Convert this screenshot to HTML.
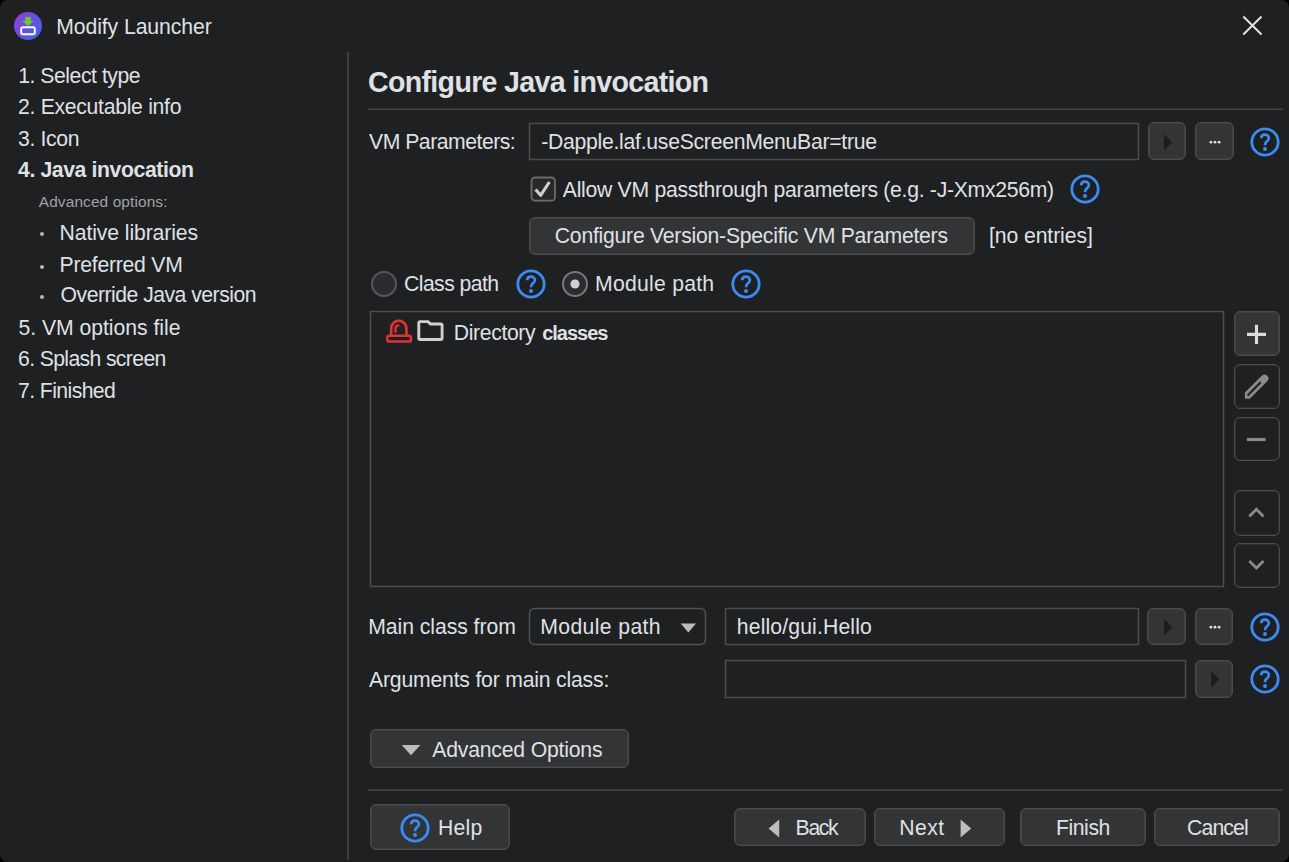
<!DOCTYPE html>
<html><head><meta charset="utf-8"><style>
html,body{margin:0;padding:0;background:#000;width:1289px;height:862px;overflow:hidden}
body{position:relative;font-family:"Liberation Sans",sans-serif}
</style></head><body>
<div style="position:absolute;left:0;top:0;width:1289px;height:862px;background:#1f2022;border-radius:8px"></div><svg style="position:absolute;left:14px;top:12px;overflow:visible" width="28" height="28" viewBox="0 0 28 28"><defs><linearGradient id="g1" x1="0" y1="0" x2="1" y2="1"><stop offset="0" stop-color="#9a3bd0"/><stop offset="1" stop-color="#3366f0"/></linearGradient></defs><circle cx="14" cy="14" r="14" fill="url(#g1)"/><path d="M11.2 5 H16.8 V9 H19.6 L14 14 L8.4 9 H11.2 Z" fill="#6cc92a"/><rect x="7.2" y="15.3" width="13.6" height="6.9" rx="1.8" fill="none" stroke="#fff" stroke-width="1.9"/></svg><svg style="position:absolute;left:1240px;top:13px;overflow:visible" width="25" height="25" viewBox="0 0 25 25"><path d="M3.3 3.5 L21.5 21.5 M21.5 3.5 L3.3 21.5" stroke="#e2e2e2" stroke-width="2.0" stroke-linecap="butt"/></svg><div style="position:absolute;left:40.3px;top:232.4px;width:4px;height:4px;border-radius:2px;background:#b8b8b8"></div><div style="position:absolute;left:40.3px;top:264.59999999999997px;width:4px;height:4px;border-radius:2px;background:#b8b8b8"></div><div style="position:absolute;left:40.3px;top:295.29999999999995px;width:4px;height:4px;border-radius:2px;background:#b8b8b8"></div><div style="position:absolute;left:347px;top:52px;width:1px;height:808px;box-sizing:border-box;background:#383939;border-radius:0px;"></div><div style="position:absolute;left:348px;top:52px;width:1px;height:808px;box-sizing:border-box;background:#434444;border-radius:0px;"></div><div style="position:absolute;left:368px;top:108px;width:915px;height:1px;box-sizing:border-box;background:#313232;border-radius:0px;"></div><div style="position:absolute;left:368px;top:109px;width:915px;height:1px;box-sizing:border-box;background:#434444;border-radius:0px;"></div><svg style="position:absolute;left:527px;top:121px;overflow:visible" width="614" height="41"><rect x="2.5" y="2.5" width="609" height="36" rx="0" fill="none" stroke="#4b4c4c" stroke-width="1.5"/></svg><div style="position:absolute;left:1148px;top:122px;width:38px;height:38px;box-sizing:border-box;background:#333436;border:1px solid #4b4c4f;border-radius:6px;box-shadow:inset 0 0 0 1px #3e3f41;"></div><svg style="position:absolute;left:1164.0500000000002px;top:133.70000000000002px;overflow:visible" width="10" height="18" viewBox="0 0 10 18"><path d="M0 0 L8.3 8.2 L0 16.5 Z" fill="#1c1c1d"/></svg><div style="position:absolute;left:1195px;top:122px;width:39px;height:38px;box-sizing:border-box;background:#333436;border:1px solid #4b4c4f;border-radius:6px;box-shadow:inset 0 0 0 1px #3e3f41;"></div><svg style="position:absolute;left:1206.4px;top:139.3px;overflow:visible" width="16" height="4" viewBox="0 0 16 4"><circle cx="4.9" cy="3.2" r="1.4" fill="#e0e0e0"/><circle cx="9" cy="3.2" r="1.4" fill="#e0e0e0"/><circle cx="13.1" cy="3.2" r="1.4" fill="#e0e0e0"/></svg><svg style="position:absolute;left:1250.2px;top:126.6px;overflow:visible" width="30" height="30" viewBox="0 0 30 30"><circle cx="15" cy="15" r="13.2" fill="none" stroke="#3a8cf4" stroke-width="2.8"/><path d="M11.2 11.2 C11.2 9 12.9 7.65 15.1 7.65 C17.3 7.65 18.9 9.2 18.9 11.1 C18.9 12.7 18 13.6 16.9 14.4 C15.8 15.3 15.1 16 15.1 17.6 V18.3" fill="none" stroke="#3a8cf4" stroke-width="2.7"/><circle cx="15" cy="22.1" r="2" fill="#3a8cf4"/></svg><svg style="position:absolute;left:528.5px;top:175.3px;overflow:visible" width="28.5" height="28.19999999999999"><rect x="2.5" y="2.5" width="23.5" height="23.19999999999999" rx="3.5" fill="#28292b" stroke="#6a6b6d" stroke-width="1.8"/></svg><svg style="position:absolute;left:530px;top:177px;overflow:visible" width="25" height="24" viewBox="0 0 25 24"><path d="M5.6 12.6 L10.6 18.3 L19.4 5" fill="none" stroke="#d0d0d0" stroke-width="3.1" stroke-linejoin="round"/></svg><svg style="position:absolute;left:1070px;top:174px;overflow:visible" width="30" height="30" viewBox="0 0 30 30"><circle cx="15" cy="15" r="13.2" fill="none" stroke="#3a8cf4" stroke-width="2.8"/><path d="M11.2 11.2 C11.2 9 12.9 7.65 15.1 7.65 C17.3 7.65 18.9 9.2 18.9 11.1 C18.9 12.7 18 13.6 16.9 14.4 C15.8 15.3 15.1 16 15.1 17.6 V18.3" fill="none" stroke="#3a8cf4" stroke-width="2.7"/><circle cx="15" cy="22.1" r="2" fill="#3a8cf4"/></svg><div style="position:absolute;left:529px;top:217px;width:446px;height:38px;box-sizing:border-box;background:#333436;border:1px solid #4b4c4f;border-radius:6px;box-shadow:inset 0 0 0 1px #3e3f41;"></div><svg style="position:absolute;left:371px;top:271px;overflow:visible" width="26" height="26" viewBox="0 0 26 26"><circle cx="13" cy="13" r="12" fill="#2b2c2f" stroke="#55575b" stroke-width="2"/></svg><svg style="position:absolute;left:515.5px;top:268.5px;overflow:visible" width="30" height="30" viewBox="0 0 30 30"><circle cx="15" cy="15" r="13.2" fill="none" stroke="#3a8cf4" stroke-width="2.8"/><path d="M11.2 11.2 C11.2 9 12.9 7.65 15.1 7.65 C17.3 7.65 18.9 9.2 18.9 11.1 C18.9 12.7 18 13.6 16.9 14.4 C15.8 15.3 15.1 16 15.1 17.6 V18.3" fill="none" stroke="#3a8cf4" stroke-width="2.7"/><circle cx="15" cy="22.1" r="2" fill="#3a8cf4"/></svg><svg style="position:absolute;left:561.8px;top:271px;overflow:visible" width="26" height="26" viewBox="0 0 26 26"><circle cx="13" cy="13" r="12" fill="#2b2c2f" stroke="#76787c" stroke-width="2"/><circle cx="13" cy="13" r="4.6" fill="#d0d0d0"/></svg><svg style="position:absolute;left:730.5px;top:269px;overflow:visible" width="30" height="30" viewBox="0 0 30 30"><circle cx="15" cy="15" r="13.2" fill="none" stroke="#3a8cf4" stroke-width="2.8"/><path d="M11.2 11.2 C11.2 9 12.9 7.65 15.1 7.65 C17.3 7.65 18.9 9.2 18.9 11.1 C18.9 12.7 18 13.6 16.9 14.4 C15.8 15.3 15.1 16 15.1 17.6 V18.3" fill="none" stroke="#3a8cf4" stroke-width="2.7"/><circle cx="15" cy="22.1" r="2" fill="#3a8cf4"/></svg><svg style="position:absolute;left:368px;top:309px;overflow:visible" width="858" height="280"><rect x="2.5" y="2.5" width="853" height="275" rx="0" fill="none" stroke="#4d4e4e" stroke-width="1.5"/></svg><svg style="position:absolute;left:385px;top:318px;overflow:visible" width="28" height="26" viewBox="0 0 28 26"><path d="M6.2 17 V10.3 A7.6 7.6 0 0 1 21.4 10.3 V17" fill="none" stroke="#e03232" stroke-width="2.7"/><path d="M10.5 13.8 V10.6 A3.2 3.2 0 0 1 13.3 7.5" fill="none" stroke="#e03232" stroke-width="2.4" stroke-linecap="round"/><rect x="2.3" y="17.7" width="23.6" height="5.8" rx="1.6" fill="none" stroke="#e03232" stroke-width="2.6"/></svg><svg style="position:absolute;left:417px;top:319px;overflow:visible" width="28" height="24" viewBox="0 0 28 24"><path d="M1.8 4 Q1.8 2.6 3.2 2.6 H11 L13.3 5 H23.7 Q25.1 5 25.1 6.4 V19.1 Q25.1 20.5 23.7 20.5 H3.2 Q1.8 20.5 1.8 19.1 Z" fill="none" stroke="#cfcfcf" stroke-width="2.9" stroke-linejoin="round"/></svg><div style="position:absolute;left:1234px;top:311px;width:46px;height:45px;box-sizing:border-box;background:#333436;border:1px solid #4b4c4f;border-radius:6px;box-shadow:inset 0 0 0 1px #3e3f41;"></div><svg style="position:absolute;left:1246px;top:324px;overflow:visible" width="22" height="21" viewBox="0 0 22 21"><path d="M1 10.4 H20 M10.5 0.8 V20" stroke="#dcdcdc" stroke-width="3.1"/></svg><div style="position:absolute;left:1234px;top:364px;width:46px;height:45px;box-sizing:border-box;background:transparent;border:1px solid #4c4d4f;border-radius:6px;box-shadow:inset 0 0 0 1px #2c2d2f;"></div><div style="position:absolute;left:1234px;top:417px;width:46px;height:44px;box-sizing:border-box;background:transparent;border:1px solid #4c4d4f;border-radius:6px;box-shadow:inset 0 0 0 1px #2c2d2f;"></div><div style="position:absolute;left:1234px;top:490px;width:46px;height:46px;box-sizing:border-box;background:transparent;border:1px solid #4c4d4f;border-radius:6px;box-shadow:inset 0 0 0 1px #2c2d2f;"></div><div style="position:absolute;left:1234px;top:543px;width:46px;height:45px;box-sizing:border-box;background:transparent;border:1px solid #4c4d4f;border-radius:6px;box-shadow:inset 0 0 0 1px #2c2d2f;"></div><svg style="position:absolute;left:1238px;top:368px;overflow:visible" width="36" height="36" viewBox="0 0 36 36"><path fill-rule="evenodd" fill="#8a8a8a" d="M6.9 30.7 L6.9 24.6 L23.75 7.75 A3.89 3.89 0 0 1 29.25 13.25 L11.8 30.7 Z M8.85 26.65 L21.95 13.55 L23.45 15.05 L10.35 28.15 Z"/></svg><svg style="position:absolute;left:1246px;top:436px;overflow:visible" width="22" height="8" viewBox="0 0 22 8"><path d="M1 3.5 H19.6" stroke="#8a8a8a" stroke-width="3.2"/></svg><svg style="position:absolute;left:1246px;top:505px;overflow:visible" width="22" height="14" viewBox="0 0 22 14"><path d="M3.3 11.4 L10.4 4.3 L17.5 11.4" fill="none" stroke="#8a8a8a" stroke-width="2.8"/></svg><svg style="position:absolute;left:1246px;top:558px;overflow:visible" width="22" height="14" viewBox="0 0 22 14"><path d="M3.3 3 L10.4 10.1 L17.5 3" fill="none" stroke="#8a8a8a" stroke-width="2.8"/></svg><svg style="position:absolute;left:527px;top:606px;overflow:visible" width="181" height="41"><rect x="2.5" y="2.5" width="176" height="36" rx="5" fill="none" stroke="#505151" stroke-width="1.5"/></svg><svg style="position:absolute;left:680px;top:622.5px;overflow:visible" width="17" height="10" viewBox="0 0 17 10"><path d="M0.7 0.5 H16 L8.35 9.5 Z" fill="#bdbdbd"/></svg><svg style="position:absolute;left:723px;top:606px;overflow:visible" width="418" height="41"><rect x="2.5" y="2.5" width="413" height="36" rx="0" fill="none" stroke="#4b4c4c" stroke-width="1.5"/></svg><div style="position:absolute;left:1147px;top:608px;width:39px;height:37px;box-sizing:border-box;background:#333436;border:1px solid #4b4c4f;border-radius:6px;box-shadow:inset 0 0 0 1px #3e3f41;"></div><svg style="position:absolute;left:1163.75px;top:618.8000000000001px;overflow:visible" width="10" height="18" viewBox="0 0 10 18"><path d="M0 0 L8.3 8.2 L0 16.5 Z" fill="#1c1c1d"/></svg><div style="position:absolute;left:1195px;top:608px;width:38px;height:37px;box-sizing:border-box;background:#333436;border:1px solid #4b4c4f;border-radius:6px;box-shadow:inset 0 0 0 1px #3e3f41;"></div><svg style="position:absolute;left:1206.4px;top:624.4000000000001px;overflow:visible" width="16" height="4" viewBox="0 0 16 4"><circle cx="4.9" cy="3.2" r="1.4" fill="#e0e0e0"/><circle cx="9" cy="3.2" r="1.4" fill="#e0e0e0"/><circle cx="13.1" cy="3.2" r="1.4" fill="#e0e0e0"/></svg><svg style="position:absolute;left:1250.2px;top:611.5px;overflow:visible" width="30" height="30" viewBox="0 0 30 30"><circle cx="15" cy="15" r="13.2" fill="none" stroke="#3a8cf4" stroke-width="2.8"/><path d="M11.2 11.2 C11.2 9 12.9 7.65 15.1 7.65 C17.3 7.65 18.9 9.2 18.9 11.1 C18.9 12.7 18 13.6 16.9 14.4 C15.8 15.3 15.1 16 15.1 17.6 V18.3" fill="none" stroke="#3a8cf4" stroke-width="2.7"/><circle cx="15" cy="22.1" r="2" fill="#3a8cf4"/></svg><svg style="position:absolute;left:723px;top:658px;overflow:visible" width="465" height="42"><rect x="2.5" y="2.5" width="460" height="37" rx="0" fill="none" stroke="#4b4c4c" stroke-width="1.5"/></svg><div style="position:absolute;left:1195px;top:660px;width:38px;height:38px;box-sizing:border-box;background:#333436;border:1px solid #4b4c4f;border-radius:6px;box-shadow:inset 0 0 0 1px #3e3f41;"></div><svg style="position:absolute;left:1211.4px;top:671.4px;overflow:visible" width="10" height="18" viewBox="0 0 10 18"><path d="M0 0 L8.3 8.2 L0 16.5 Z" fill="#1c1c1d"/></svg><svg style="position:absolute;left:1250.2px;top:664px;overflow:visible" width="30" height="30" viewBox="0 0 30 30"><circle cx="15" cy="15" r="13.2" fill="none" stroke="#3a8cf4" stroke-width="2.8"/><path d="M11.2 11.2 C11.2 9 12.9 7.65 15.1 7.65 C17.3 7.65 18.9 9.2 18.9 11.1 C18.9 12.7 18 13.6 16.9 14.4 C15.8 15.3 15.1 16 15.1 17.6 V18.3" fill="none" stroke="#3a8cf4" stroke-width="2.7"/><circle cx="15" cy="22.1" r="2" fill="#3a8cf4"/></svg><div style="position:absolute;left:370px;top:729px;width:259px;height:39px;box-sizing:border-box;background:#333436;border:1px solid #4b4c4f;border-radius:6px;box-shadow:inset 0 0 0 1px #3e3f41;"></div><svg style="position:absolute;left:401px;top:744px;overflow:visible" width="20" height="12" viewBox="0 0 20 12"><path d="M0.7 1 H19.4 L10 11.2 Z" fill="#bdbdbd"/></svg><div style="position:absolute;left:367.5px;top:789px;width:915.5px;height:1px;box-sizing:border-box;background:#3a3b3b;border-radius:0px;"></div><div style="position:absolute;left:367.5px;top:790px;width:915.5px;height:1px;box-sizing:border-box;background:#3f4040;border-radius:0px;"></div><div style="position:absolute;left:370px;top:804px;width:140px;height:46px;box-sizing:border-box;background:#333436;border:1px solid #4b4c4f;border-radius:6px;box-shadow:inset 0 0 0 1px #3e3f41;"></div><svg style="position:absolute;left:399.7px;top:812.7px;overflow:visible" width="30" height="30" viewBox="0 0 30 30"><circle cx="15" cy="15" r="13.2" fill="none" stroke="#3a8cf4" stroke-width="2.8"/><path d="M11.2 11.2 C11.2 9 12.9 7.65 15.1 7.65 C17.3 7.65 18.9 9.2 18.9 11.1 C18.9 12.7 18 13.6 16.9 14.4 C15.8 15.3 15.1 16 15.1 17.6 V18.3" fill="none" stroke="#3a8cf4" stroke-width="2.7"/><circle cx="15" cy="22.1" r="2" fill="#3a8cf4"/></svg><div style="position:absolute;left:734px;top:808px;width:132px;height:38px;box-sizing:border-box;background:#333436;border:1px solid #4b4c4f;border-radius:6px;box-shadow:inset 0 0 0 1px #3e3f41;"></div><svg style="position:absolute;left:768px;top:818.5px;overflow:visible" width="12" height="19" viewBox="0 0 12 19"><path d="M11.2 0.4 V18.6 L0.6 9.5 Z" fill="#bdbdbd"/></svg><div style="position:absolute;left:874px;top:808px;width:131px;height:38px;box-sizing:border-box;background:#333436;border:1px solid #4b4c4f;border-radius:6px;box-shadow:inset 0 0 0 1px #3e3f41;"></div><svg style="position:absolute;left:960px;top:818.5px;overflow:visible" width="12" height="19" viewBox="0 0 12 19"><path d="M0.6 0.4 V18.6 L11.2 9.5 Z" fill="#bdbdbd"/></svg><div style="position:absolute;left:1020px;top:808px;width:126px;height:38px;box-sizing:border-box;background:#333436;border:1px solid #4b4c4f;border-radius:6px;box-shadow:inset 0 0 0 1px #3e3f41;"></div><div style="position:absolute;left:1154px;top:808px;width:126px;height:38px;box-sizing:border-box;background:#333436;border:1px solid #4b4c4f;border-radius:6px;box-shadow:inset 0 0 0 1px #3e3f41;"></div><div id="title" style="position:absolute;left:56.20px;top:16.10px;font-size:21.2px;line-height:21.2px;font-weight:400;color:#dfe1e5;white-space:pre;letter-spacing:-0.079px">Modify Launcher<i style="display:inline-block;width:0;height:0"></i></div><div id="n1" style="position:absolute;left:18.20px;top:65.01px;font-size:21.2px;line-height:21.2px;font-weight:400;color:#dfe1e5;white-space:pre;letter-spacing:-0.462px">1. Select type<i style="display:inline-block;width:0;height:0"></i></div><div id="n2" style="position:absolute;left:18.00px;top:95.51px;font-size:21.2px;line-height:21.2px;font-weight:400;color:#dfe1e5;white-space:pre;letter-spacing:-0.294px">2. Executable info<i style="display:inline-block;width:0;height:0"></i></div><div id="n3" style="position:absolute;left:18.00px;top:127.60px;font-size:21.2px;line-height:21.2px;font-weight:400;color:#dfe1e5;white-space:pre;letter-spacing:-0.333px">3. Icon<i style="display:inline-block;width:0;height:0"></i></div><div id="n4" style="position:absolute;left:18.00px;top:159.01px;font-size:21.2px;line-height:21.2px;font-weight:700;color:#dfe1e5;white-space:pre;letter-spacing:-0.382px">4. Java invocation<i style="display:inline-block;width:0;height:0"></i></div><div id="adv" style="position:absolute;left:38.80px;top:193.81px;font-size:15.4px;line-height:15.4px;font-weight:400;color:#a0a2a6;white-space:pre;letter-spacing:0.125px">Advanced options:<i style="display:inline-block;width:0;height:0"></i></div><div id="b0" style="position:absolute;left:59.60px;top:221.51px;font-size:21.2px;line-height:21.2px;font-weight:400;color:#dfe1e5;white-space:pre;letter-spacing:-0.107px">Native libraries<i style="display:inline-block;width:0;height:0"></i></div><div id="b1" style="position:absolute;left:59.60px;top:253.72px;font-size:21.2px;line-height:21.2px;font-weight:400;color:#dfe1e5;white-space:pre;letter-spacing:-0.255px">Preferred VM<i style="display:inline-block;width:0;height:0"></i></div><div id="b2" style="position:absolute;left:60.60px;top:284.41px;font-size:21.2px;line-height:21.2px;font-weight:400;color:#dfe1e5;white-space:pre;letter-spacing:-0.510px">Override Java version<i style="display:inline-block;width:0;height:0"></i></div><div id="n5" style="position:absolute;left:18.40px;top:316.81px;font-size:21.2px;line-height:21.2px;font-weight:400;color:#dfe1e5;white-space:pre;letter-spacing:-0.024px">5. VM options file<i style="display:inline-block;width:0;height:0"></i></div><div id="n6" style="position:absolute;left:18.00px;top:347.72px;font-size:21.2px;line-height:21.2px;font-weight:400;color:#dfe1e5;white-space:pre;letter-spacing:-0.633px">6. Splash screen<i style="display:inline-block;width:0;height:0"></i></div><div id="n7" style="position:absolute;left:18.00px;top:379.72px;font-size:21.2px;line-height:21.2px;font-weight:400;color:#dfe1e5;white-space:pre;letter-spacing:-0.580px">7. Finished<i style="display:inline-block;width:0;height:0"></i></div><div id="head" style="position:absolute;left:368.00px;top:68.00px;font-size:28.6px;line-height:28.6px;font-weight:700;color:#dfe1e5;white-space:pre;letter-spacing:-0.688px">Configure Java invocation<i style="display:inline-block;width:0;height:0"></i></div><div id="vml" style="position:absolute;left:369.00px;top:130.72px;font-size:21.2px;line-height:21.2px;font-weight:400;color:#dfe1e5;white-space:pre;letter-spacing:-0.485px">VM Parameters:<i style="display:inline-block;width:0;height:0"></i></div><div id="vmv" style="position:absolute;left:541.20px;top:130.72px;font-size:21.2px;line-height:21.2px;font-weight:400;color:#dfe1e5;white-space:pre;letter-spacing:-0.269px">-Dapple.laf.useScreenMenuBar=true<i style="display:inline-block;width:0;height:0"></i></div><div id="allow" style="position:absolute;left:562.80px;top:178.81px;font-size:21.2px;line-height:21.2px;font-weight:400;color:#dfe1e5;white-space:pre;letter-spacing:-0.288px">Allow VM passthrough parameters (e.g. -J-Xmx256m)<i style="display:inline-block;width:0;height:0"></i></div><div id="cvs" style="position:absolute;left:554.80px;top:225.41px;font-size:21.2px;line-height:21.2px;font-weight:400;color:#dfe1e5;white-space:pre;letter-spacing:-0.244px">Configure Version-Specific VM Parameters<i style="display:inline-block;width:0;height:0"></i></div><div id="noent" style="position:absolute;left:989.00px;top:225.41px;font-size:21.2px;line-height:21.2px;font-weight:400;color:#dfe1e5;white-space:pre;letter-spacing:-0.091px">[no entries]<i style="display:inline-block;width:0;height:0"></i></div><div id="cp" style="position:absolute;left:404.00px;top:272.60px;font-size:21.2px;line-height:21.2px;font-weight:400;color:#dfe1e5;white-space:pre;letter-spacing:-0.556px">Class path<i style="display:inline-block;width:0;height:0"></i></div><div id="mp" style="position:absolute;left:595.00px;top:272.60px;font-size:21.2px;line-height:21.2px;font-weight:400;color:#dfe1e5;white-space:pre;letter-spacing:0.250px">Module path<i style="display:inline-block;width:0;height:0"></i></div><div id="dir" style="position:absolute;left:453.80px;top:322.10px;font-size:21.2px;line-height:21.2px;font-weight:400;color:#dfe1e5;white-space:pre;letter-spacing:-0.362px">Directory<i style="display:inline-block;width:0;height:0"></i></div><div id="cls" style="position:absolute;left:542.20px;top:323.10px;font-size:20px;line-height:20px;font-weight:700;color:#dfe1e5;white-space:pre;letter-spacing:-1.017px">classes<i style="display:inline-block;width:0;height:0"></i></div><div id="mcf" style="position:absolute;left:368.20px;top:615.70px;font-size:21.2px;line-height:21.2px;font-weight:400;color:#dfe1e5;white-space:pre;letter-spacing:-0.050px">Main class from<i style="display:inline-block;width:0;height:0"></i></div><div id="mpc" style="position:absolute;left:540.20px;top:615.70px;font-size:21.2px;line-height:21.2px;font-weight:400;color:#dfe1e5;white-space:pre;letter-spacing:0.380px">Module path<i style="display:inline-block;width:0;height:0"></i></div><div id="hello" style="position:absolute;left:736.80px;top:615.60px;font-size:21.2px;line-height:21.2px;font-weight:400;color:#dfe1e5;white-space:pre;letter-spacing:0.136px">hello/gui.Hello<i style="display:inline-block;width:0;height:0"></i></div><div id="args" style="position:absolute;left:369.00px;top:668.60px;font-size:21.2px;line-height:21.2px;font-weight:400;color:#dfe1e5;white-space:pre;letter-spacing:-0.192px">Arguments for main class:<i style="display:inline-block;width:0;height:0"></i></div><div id="advo" style="position:absolute;left:432.20px;top:738.91px;font-size:21.2px;line-height:21.2px;font-weight:400;color:#dfe1e5;white-space:pre;letter-spacing:-0.187px">Advanced Options<i style="display:inline-block;width:0;height:0"></i></div><div id="help" style="position:absolute;left:438.00px;top:817.01px;font-size:21.2px;line-height:21.2px;font-weight:400;color:#dfe1e5;white-space:pre;letter-spacing:0.267px">Help<i style="display:inline-block;width:0;height:0"></i></div><div id="back" style="position:absolute;left:795.60px;top:816.91px;font-size:21.2px;line-height:21.2px;font-weight:400;color:#dfe1e5;white-space:pre;letter-spacing:-1.333px">Back<i style="display:inline-block;width:0;height:0"></i></div><div id="next" style="position:absolute;left:899.20px;top:816.91px;font-size:21.2px;line-height:21.2px;font-weight:400;color:#dfe1e5;white-space:pre;letter-spacing:0.433px">Next<i style="display:inline-block;width:0;height:0"></i></div><div id="fin" style="position:absolute;left:1056.00px;top:816.91px;font-size:21.2px;line-height:21.2px;font-weight:400;color:#dfe1e5;white-space:pre;letter-spacing:-0.440px">Finish<i style="display:inline-block;width:0;height:0"></i></div><div id="can" style="position:absolute;left:1187.00px;top:816.91px;font-size:21.2px;line-height:21.2px;font-weight:400;color:#dfe1e5;white-space:pre;letter-spacing:-0.840px">Cancel<i style="display:inline-block;width:0;height:0"></i></div>
</body></html>
